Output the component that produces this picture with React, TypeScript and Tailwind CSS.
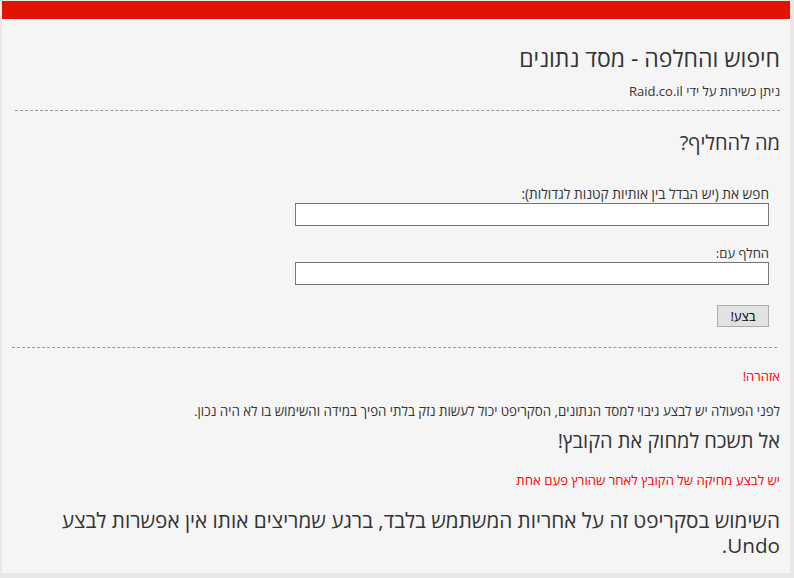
export default function App() {
  const font = { fontFamily: '"Open Sans", "Liberation Sans", "DejaVu Sans", sans-serif' };
  return (
    <div className="w-full h-[578px] bg-[#e8e8e8] pt-[1px] pl-[2px] overflow-hidden" style={font}>
      <div dir="rtl" className="w-[788px] h-[572px] bg-[#f5f5f5] text-[#333]">
        <div className="h-[18px] bg-[#e01400]" />
        <div className="pr-[10px] pl-[13px]">
          <h1 className="mt-[25px] text-[23px] leading-[28px] font-normal">חיפוש והחלפה - מסד נתונים</h1>
          <p className="mt-[11px] text-[13px] leading-[16px]">ניתן כשירות על ידי Raid.co.il</p>
          <div className="mt-[11px] border-t border-dashed border-[#999]" />
          <h2 className="mt-[20px] text-[20px] leading-[24px] font-normal">מה להחליף?</h2>
          <div className="pr-[11px]">
            <label className="block mt-[31px] text-[13.7px] leading-[16px]">חפש את (יש הבדל בין אותיות קטנות לגדולות):</label>
            <input className="block mt-[1px] w-[474px] h-[23px] bg-white border border-[#767676] outline-none" />
            <label className="block mt-[19px] text-[13px] leading-[16px]">החלף עם:</label>
            <input className="block mt-[1px] w-[474px] h-[23px] bg-white border border-[#767676] outline-none" />
            <button className="block mt-[20px] w-[52px] h-[22px] bg-[#e1e1e1] border border-[#adadad] text-[13px] leading-[16px] text-black">בצע!</button>
          </div>
          <div className="mt-[20px] mr-[3px] ml-[-3px] border-t border-dashed border-[#999]" />
          <p className="mt-[20px] text-[13px] leading-[16px] text-[#ff0000]">אזהרה!</p>
          <p className="mt-[19px] text-[13.3px] leading-[16px]">לפני הפעולה יש לבצע גיבוי למסד הנתונים, הסקריפט יכול לעשות נזק בלתי הפיך במידה והשימוש בו לא היה נכון.</p>
          <h3 className="mt-[10px] text-[20px] leading-[24px] font-normal">אל תשכח למחוק את הקובץ!</h3>
          <p className="mt-[19px] text-[13.2px] leading-[16px] text-[#ff0000]">יש לבצע מחיקה של הקובץ לאחר שהורץ פעם אחת</p>
          <h3 className="mt-[20px] text-[20.7px] leading-[25px] font-normal">השימוש בסקריפט זה על אחריות המשתמש בלבד, ברגע שמריצים אותו אין אפשרות לבצע Undo.</h3>
        </div>
      </div>
    </div>
  );
}
